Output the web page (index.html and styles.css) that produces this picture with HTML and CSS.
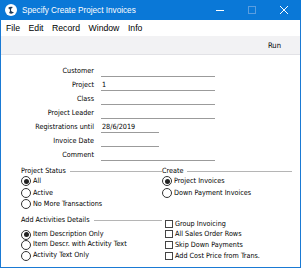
FILE: index.html
```html
<!DOCTYPE html>
<html lang="en">
<head>
    <meta charset="UTF-8">
    <title>Specify Create Project Invoices</title>
    <link rel="stylesheet" href="styles.css">
</head>
<body>
    <div class="window">
        <div class="titlebar">
            <svg class="app-icon" width="12" height="12" viewBox="0 0 12 12">
                <circle cx="6" cy="6" r="6" fill="#fff"/>
                <path d="M3 4 Q5 2 8 3 Q6 4 6 6 Q6 8 9 8 Q7 11 4 9 Q5 8 5 6 Q5 5 3 4 Z" fill="#1e3b5a"/>
            </svg>
            <span class="title">Specify Create Project Invoices</span>
            <div class="controls">
                <svg width="8" height="8" viewBox="0 0 8 8"><path d="M0 4.5H8" stroke="#fff" stroke-width="1"/></svg>
                <svg width="8" height="8" viewBox="0 0 8 8"><rect x="0.5" y="0.5" width="7" height="7" fill="none" stroke="#5a9ee0"/></svg>
                <svg width="8" height="8" viewBox="0 0 8 8"><path d="M0 0L8 8M8 0L0 8" stroke="#fff" stroke-width="1"/></svg>
            </div>
        </div>
        <div class="menubar">
            <span>File</span>
            <span>Edit</span>
            <span>Record</span>
            <span>Window</span>
            <span>Info</span>
        </div>
        <div class="toolbar">
            <span class="run">Run</span>
        </div>
        <div class="content">
            <div class="form">
                <label>Customer</label><div class="field"></div>
                <label>Project</label><div class="field">1</div>
                <label>Class</label><div class="field"></div>
                <label>Project Leader</label><div class="field"></div>
                <label>Registrations until</label><div class="field short">28/6/2019</div>
                <label>Invoice Date</label><div class="field short"></div>
                <label>Comment</label><div class="field"></div>
            </div>

            <div class="groups">
                <div class="group">
                    <div class="group-head">Project Status</div>
                    <div class="radio checked">All</div>
                    <div class="radio">Active</div>
                    <div class="radio">No More Transactions</div>
                </div>
                <div class="group">
                    <div class="group-head">Create</div>
                    <div class="radio checked">Project Invoices</div>
                    <div class="radio">Down Payment Invoices</div>
                </div>
            </div>

            <div class="groups lower">
                <div class="group">
                    <div class="group-head">Add Activities Details</div>
                    <div class="radio checked">Item Description Only</div>
                    <div class="radio">Item Descr. with Activity Text</div>
                    <div class="radio">Activity Text Only</div>
                </div>
                <div class="group checks">
                    <div class="check">Group Invoicing</div>
                    <div class="check">All Sales Order Rows</div>
                    <div class="check">Skip Down Payments</div>
                    <div class="check">Add Cost Price from Trans.</div>
                </div>
            </div>
        </div>
    </div>
</body>
</html>
```

FILE: styles.css
```css
body {
    margin: 0;
    font-family: "DejaVu Sans Condensed", "DejaVu Sans", sans-serif;
    font-stretch: condensed;
    font-size: 7.2px;
    color: #000;
}
.window {
    width: 301px;
    height: 268px;
    box-sizing: border-box;
    border: 1px solid #1a7ad4;
    border-top: none;
    background: #fff;
    display: flex;
    flex-direction: column;
}
.titlebar {
    height: 20px;
    margin: 0 -1px;
    background: #0a78d7;
    color: #fff;
    display: flex;
    align-items: center;
    padding-left: 5px;
}
.app-icon {
    margin-right: 5px;
}
.title {
    font-family: "Liberation Sans", sans-serif;
    font-stretch: normal;
    font-size: 8.2px;
}
.controls {
    margin-left: auto;
    display: flex;
    gap: 24px;
    padding-right: 13px;
}
.menubar {
    height: 16px;
    display: flex;
    align-items: center;
    gap: 8.5px;
    padding-left: 5px;
    font-family: "Liberation Sans", sans-serif;
    font-stretch: normal;
    font-size: 8.7px;
}
.toolbar {
    height: 18px;
    background: #f2f2f4;
    border-bottom: 1px solid #e2e2e6;
    display: flex;
    align-items: center;
    justify-content: flex-end;
    padding-right: 19px;
    font-size: 7.6px;
}
.content {
    padding: 10px 0 0 20px;
}
.form {
    display: grid;
    grid-template-columns: 73px 114px;
    column-gap: 7px;
    row-gap: 2px;
}
.form label {
    text-align: right;
    height: 12px;
    line-height: 12px;
}
.field {
    height: 11px;
    line-height: 12px;
    border-bottom: 1px solid #9b9b9b;
    padding-left: 1px;
}
.field.short {
    width: 57px;
}
.groups {
    display: flex;
    margin-top: 4px;
    margin-right: 8px;
}
.groups.lower {
    margin-top: 5px;
}
.group {
    width: 141px;
}
.group + .group {
    flex: 1;
}
.group-head {
    display: flex;
    align-items: center;
    height: 10px;
    margin-bottom: 0;
}
.lower .group-head {
    margin-bottom: 4px;
}
.group-head::after {
    content: "";
    flex: 1;
    border-top: 1px solid #b5b5b5;
    margin: 2px 0 0 4px;
}
.radio {
    position: relative;
    height: 11.5px;
    line-height: 11.5px;
    padding-left: 12px;
}
.lower .radio {
    height: 10.7px;
    line-height: 10.7px;
}
.radio::before {
    content: "";
    position: absolute;
    left: 0;
    top: 1px;
    width: 10px;
    height: 10px;
    border: 1px solid #333;
    border-radius: 50%;
    box-sizing: border-box;
}
.radio.checked::after {
    content: "";
    position: absolute;
    left: 2.5px;
    top: 3.5px;
    width: 5px;
    height: 5px;
    border-radius: 50%;
    background: #222;
}
.checks {
    padding-top: 4px;
    padding-left: 3px;
}
.check {
    position: relative;
    height: 10.7px;
    line-height: 10.7px;
    padding-left: 10px;
}
.check::before {
    content: "";
    position: absolute;
    left: 0;
    top: 1px;
    width: 8px;
    height: 8px;
    border: 1px solid #444;
    box-sizing: border-box;
}
```
